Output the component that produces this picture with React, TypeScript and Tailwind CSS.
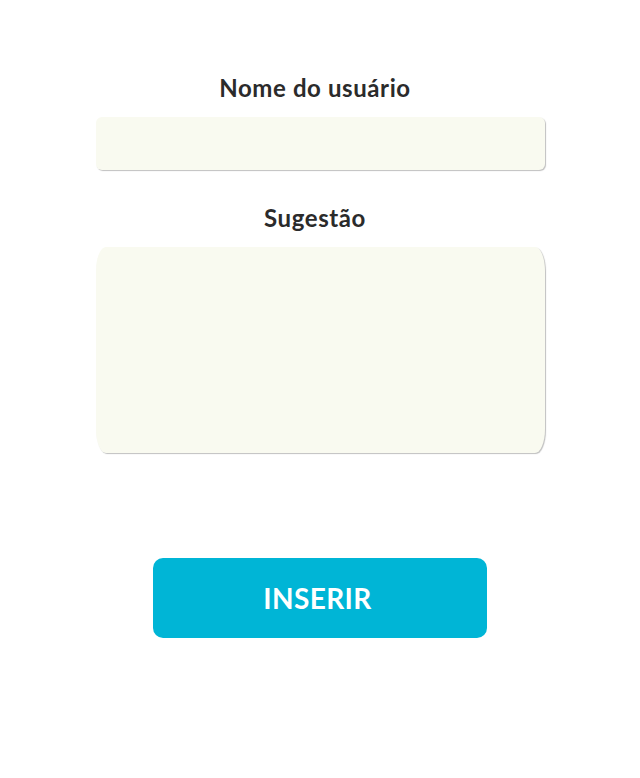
export default function App() {
  return (
    <div className="min-h-[778px] w-full bg-white font-['Lato',sans-serif] text-[#2b2b2b]">
      <form className="mx-auto flex w-[449px] flex-col items-center pt-[70px]">
        <label className="pr-[10px] text-[24px] font-bold leading-[35px] tracking-[0.6px]">Nome do usuário</label>
        <input
          type="text"
          className="mt-[12px] h-[53px] w-full rounded-[6px] bg-[#f9faf0] shadow-[1px_1px_1px_rgba(0,0,0,0.25)] outline-none"
        />
        <label className="mt-[30px] pr-[10px] text-[24px] font-bold leading-[35px] tracking-[0.6px]">Sugestão</label>
        <textarea className="mt-[12px] h-[206px] w-full resize-none rounded-[10px/24px] bg-[#f9faf0] shadow-[1px_1px_1px_rgba(0,0,0,0.25)] outline-none" />
        <button
          type="button"
          className="mt-[105px] h-[80px] w-[334px] rounded-[10px] bg-[#00b5d6] pr-[5px] text-[28px] font-bold tracking-[0.4px] text-white"
        >
          INSERIR
        </button>
      </form>
    </div>
  );
}
